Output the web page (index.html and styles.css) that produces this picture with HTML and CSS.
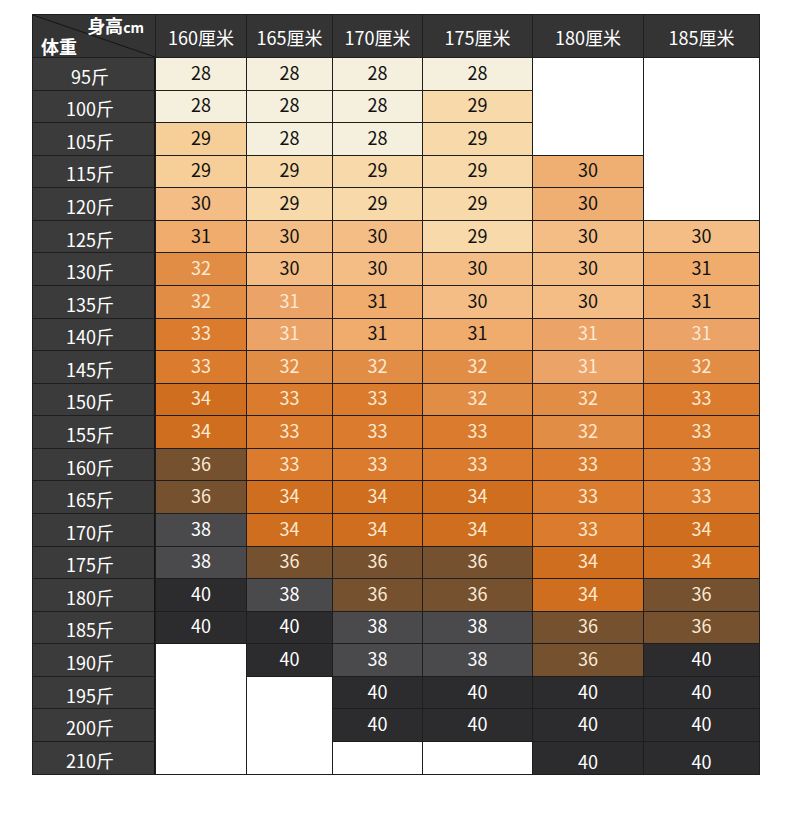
FILE: index.html
```html
<!DOCTYPE html>
<html lang="zh">
<head>
<meta charset="utf-8">
<link rel="stylesheet" href="styles.css">
</head>
<body>
<div class="chart">
  <div class="corner"><span class="h-top">身高<small>cm</small></span><span class="h-bot">体重</span></div>
  <div class="hd">160厘米</div><div class="hd">165厘米</div><div class="hd">170厘米</div><div class="hd">175厘米</div><div class="hd">180厘米</div><div class="hd">185厘米</div>

  <div class="lb">95斤</div><div class="c v28">28</div><div class="c v28">28</div><div class="c v28">28</div><div class="c v28">28</div><div class="blank s3"></div><div class="blank s5"></div>
  <div class="lb">100斤</div><div class="c v28">28</div><div class="c v28">28</div><div class="c v28">28</div><div class="c v29">29</div>
  <div class="lb">105斤</div><div class="c v29d">29</div><div class="c v28">28</div><div class="c v28">28</div><div class="c v29">29</div>
  <div class="lb">115斤</div><div class="c v29d">29</div><div class="c v29">29</div><div class="c v29">29</div><div class="c v29">29</div><div class="c v30d">30</div>
  <div class="lb">120斤</div><div class="c v30">30</div><div class="c v29">29</div><div class="c v29">29</div><div class="c v29">29</div><div class="c v30d">30</div>
  <div class="lb">125斤</div><div class="c v31">31</div><div class="c v30">30</div><div class="c v30">30</div><div class="c v29">29</div><div class="c v30">30</div><div class="c v30">30</div>
  <div class="lb">130斤</div><div class="c v32">32</div><div class="c v30">30</div><div class="c v30">30</div><div class="c v30">30</div><div class="c v30">30</div><div class="c v31">31</div>
  <div class="lb">135斤</div><div class="c v32">32</div><div class="c v31w">31</div><div class="c v31">31</div><div class="c v30">30</div><div class="c v30">30</div><div class="c v31">31</div>
  <div class="lb">140斤</div><div class="c v33">33</div><div class="c v31w">31</div><div class="c v31">31</div><div class="c v31">31</div><div class="c v31w">31</div><div class="c v31w">31</div>
  <div class="lb">145斤</div><div class="c v33">33</div><div class="c v32">32</div><div class="c v32">32</div><div class="c v32">32</div><div class="c v31w">31</div><div class="c v32">32</div>
  <div class="lb">150斤</div><div class="c v34">34</div><div class="c v33">33</div><div class="c v33">33</div><div class="c v32">32</div><div class="c v32">32</div><div class="c v33">33</div>
  <div class="lb">155斤</div><div class="c v34">34</div><div class="c v33">33</div><div class="c v33">33</div><div class="c v33">33</div><div class="c v32">32</div><div class="c v33">33</div>
  <div class="lb">160斤</div><div class="c v36">36</div><div class="c v33">33</div><div class="c v33">33</div><div class="c v33">33</div><div class="c v33">33</div><div class="c v33">33</div>
  <div class="lb">165斤</div><div class="c v36">36</div><div class="c v34">34</div><div class="c v34">34</div><div class="c v34">34</div><div class="c v33">33</div><div class="c v33">33</div>
  <div class="lb">170斤</div><div class="c v38">38</div><div class="c v34">34</div><div class="c v34">34</div><div class="c v34">34</div><div class="c v33">33</div><div class="c v34">34</div>
  <div class="lb">175斤</div><div class="c v38">38</div><div class="c v36">36</div><div class="c v36">36</div><div class="c v36">36</div><div class="c v34">34</div><div class="c v34">34</div>
  <div class="lb">180斤</div><div class="c v40">40</div><div class="c v38">38</div><div class="c v36">36</div><div class="c v36">36</div><div class="c v34">34</div><div class="c v36">36</div>
  <div class="lb">185斤</div><div class="c v40">40</div><div class="c v40">40</div><div class="c v38">38</div><div class="c v38">38</div><div class="c v36">36</div><div class="c v36">36</div>
  <div class="lb">190斤</div><div class="blank s4"></div><div class="c v40">40</div><div class="c v38">38</div><div class="c v38">38</div><div class="c v36">36</div><div class="c v40">40</div>
  <div class="lb">195斤</div><div class="blank s3"></div><div class="c v40">40</div><div class="c v40">40</div><div class="c v40">40</div><div class="c v40">40</div>
  <div class="lb">200斤</div><div class="c v40">40</div><div class="c v40">40</div><div class="c v40">40</div><div class="c v40">40</div>
  <div class="lb">210斤</div><div class="blank"></div><div class="blank"></div><div class="c v40 low">40</div><div class="c v40 low">40</div>
</div>
</body>
</html>
```

FILE: styles.css
```css
* { box-sizing: border-box; }
html, body { margin: 0; padding: 0; background: #ffffff; }
body {
  padding: 14px 0 0 32px;
  font-family: "Noto Sans CJK SC", "Noto Sans", sans-serif;
}
.chart {
  width: 728px;
  height: 761px;
  display: grid;
  grid-template-columns: 122px 90px 85px 89px 109px 110px 115px;
  grid-template-rows: 42px repeat(22, 1fr);
  gap: 1px;
  background: #1e1e1e;
  border: 1px solid #1e1e1e;
}
.corner {
  background: linear-gradient(to top right, #343434 calc(50% - 1px), #151515 50%, #343434 calc(50% + 1px));
  color: #fff;
  display: flex;
  flex-direction: column;
  justify-content: space-between;
  padding: 0 11px 2px 8px;
  line-height: 1;
}
.h-top { align-self: flex-end; font-size: 18px; font-weight: 700; padding-top: 1px; }
.h-top small { font-size: 14px; font-weight: 700; }
.h-bot { align-self: flex-start; font-size: 18px; font-weight: 700; }
.hd {
  background: #343434;
  color: #fff;
  font-size: 18px;
  display: flex;
  align-items: center;
  justify-content: center;
  padding-top: 1px;
}
.lb {
  background: #3b3b3b;
  color: #fff;
  font-size: 18px;
  display: flex;
  align-items: center;
  justify-content: center;
  padding: 4px 7px 0 0;
  border-right: 1px solid #141414;
}
.c {
  font-size: 18px;
  display: flex;
  align-items: center;
  justify-content: center;
  padding-bottom: 4px;
  color: #111;
}
.c.low { padding-bottom: 0; padding-top: 6px; }
.blank { background: #ffffff; }
.s3 { grid-row: span 3; }
.s4 { grid-row: span 4; }
.s5 { grid-row: span 5; }
.v28 { background: #f5efdd; }
.v29 { background: #f7d9aa; }
.v29d { background: #f6cf98; }
.v30 { background: #f3bd85; }
.v30d { background: #efae72; }
.v31 { background: #efac6d; }
.v31w { background: #eca368; color: #fbead4; }
.v32 { background: #e28d45; color: #fbead4; }
.v33 { background: #da7b2d; color: #fbead4; }
.v34 { background: #cf6e1e; color: #fbead4; }
.v36 { background: #765130; color: #fbead4; }
.v38 { background: #4a494c; color: #fff; }
.v40 { background: #2c2b2d; color: #fff; }
```
